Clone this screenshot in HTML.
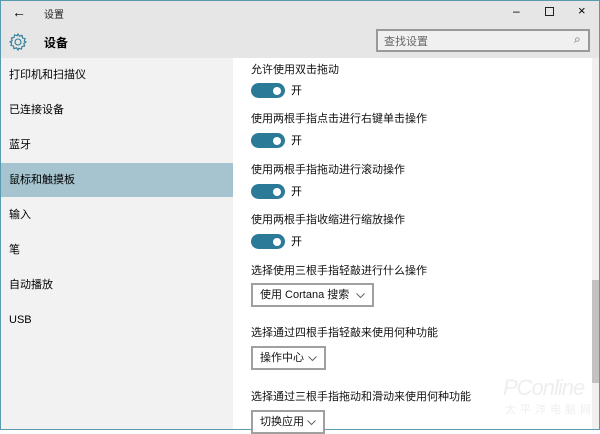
<!DOCTYPE html>
<html><head><meta charset="utf-8"><style>
*{margin:0;padding:0;box-sizing:border-box}
body{width:600px;height:430px;overflow:hidden;position:relative;background:#fff;font-family:"Liberation Sans","Noto Sans CJK SC",sans-serif;color:#000}
.a{position:absolute}
.hdr{left:0;top:0;width:600px;height:58px;background:#e6e6e6}
.side{left:0;top:58px;width:233px;height:372px;background:#f2f2f2}
.it{position:absolute;left:9px;font-size:11px;line-height:16px}
.lab{position:absolute;left:251px;font-size:11px;line-height:16px;color:#111}
.tg{position:absolute;left:251px;width:34px;height:15px;border-radius:8px;background:#2b7a98}
.tg:after{content:"";position:absolute;right:4px;top:3.5px;width:8px;height:8px;border-radius:50%;background:#fff}
.on{position:absolute;left:291px;font-size:11px;line-height:16px}
.dd{position:absolute;left:251px;height:24px;border:2px solid #a0a0a0;background:#fff;font-size:11px;line-height:20px;padding-left:7px;color:#111;white-space:nowrap}
.dd svg{position:absolute;right:7px;top:8px}
</style></head><body>
<div class="a hdr"></div>
<div class="a side"></div>
<div class="a" style="left:0;top:0;width:1px;height:430px;background:#5a9ab0"></div>
<div class="a" style="left:599px;top:0;width:1px;height:430px;background:#5a9ab0"></div>
<div class="a" style="left:0;top:0;width:600px;height:1px;background:#5a9ab0"></div>
<div class="a" style="left:0;top:429px;width:600px;height:1px;background:#5a9ab0"></div>
<div class="a" style="left:12px;top:4px;font-size:14px">&#8592;</div>
<div class="a" style="left:44px;top:6px;font-size:10px;color:#222">设置</div>
<div class="a" style="left:513px;top:4px;font-size:12px">&#8211;</div>
<div class="a" style="left:545px;top:7px;width:9px;height:9px;border:1px solid #222"></div>
<div class="a" style="left:578px;top:3px;font-size:13px">&#215;</div>
<svg class="a" style="left:8px;top:32px" width="20" height="20" viewBox="0 0 20 20"><path d="M10 2l1.5 2.2 2.6-.8.4 2.6 2.6.5-.8 2.6L18 10l-2.2 1.5.8 2.6-2.6.4-.5 2.6-2.6-.8L10 18l-1.5-2.2-2.6.8-.4-2.6-2.6-.5.8-2.6L2 10l2.2-1.5-.8-2.6 2.6-.4.5-2.6 2.6.8z" fill="none" stroke="#2b7a98" stroke-width="1.1"/><circle cx="10" cy="10" r="3" fill="none" stroke="#2b7a98" stroke-width="1.1"/></svg>
<div class="a" style="left:44px;top:34px;font-size:12px;font-weight:bold">设备</div>
<div class="a" style="left:376px;top:29px;width:214px;height:23px;border:2px solid #999;background:#f0f0f0"></div>
<div class="a" style="left:384px;top:33px;font-size:11px;color:#666">查找设置</div>
<div class="a" style="left:574px;top:32px;font-size:12px;color:#666">&#8981;</div>
<div class="a" style="left:1px;top:163px;width:232px;height:34px;background:#a5c4cf"></div>
<div class="it" style="top:67px">打印机和扫描仪</div>
<div class="it" style="top:102px">已连接设备</div>
<div class="it" style="top:137px">蓝牙</div>
<div class="it" style="top:172px">鼠标和触摸板</div>
<div class="it" style="top:207px">输入</div>
<div class="it" style="top:242px">笔</div>
<div class="it" style="top:277px">自动播放</div>
<div class="it" style="top:312px">USB</div>
<div class="lab" style="top:62px">允许使用双击拖动</div>
<div class="tg" style="top:83px"></div><div class="on" style="top:83px">开</div>
<div class="lab" style="top:111px">使用两根手指点击进行右键单击操作</div>
<div class="tg" style="top:133px"></div><div class="on" style="top:133px">开</div>
<div class="lab" style="top:162px">使用两根手指拖动进行滚动操作</div>
<div class="tg" style="top:184px"></div><div class="on" style="top:184px">开</div>
<div class="lab" style="top:212px">使用两根手指收缩进行缩放操作</div>
<div class="tg" style="top:234px"></div><div class="on" style="top:234px">开</div>
<div class="lab" style="top:263px">选择使用三根手指轻敲进行什么操作</div>
<div class="dd" style="top:283px;width:123px">使用 Cortana 搜索<svg width="9" height="6" viewBox="0 0 9 6"><path d="M.5.5l4 4 4-4" fill="none" stroke="#666"/></svg></div>
<div class="lab" style="top:325px">选择通过四根手指轻敲来使用何种功能</div>
<div class="dd" style="top:346px;width:75px">操作中心<svg width="9" height="6" viewBox="0 0 9 6"><path d="M.5.5l4 4 4-4" fill="none" stroke="#666"/></svg></div>
<div class="lab" style="top:389px">选择通过三根手指拖动和滑动来使用何种功能</div>
<div class="dd" style="top:410px;width:74px;height:24px">切换应用<svg width="9" height="6" viewBox="0 0 9 6"><path d="M.5.5l4 4 4-4" fill="none" stroke="#666"/></svg></div>
<div class="a" style="left:592px;top:58px;width:7px;height:371px;background:#f0f0f0"></div>
<div class="a" style="left:592px;top:280px;width:7px;height:103px;background:#c2c2c2"></div>
<div class="a" style="left:503px;top:375px;font-size:22px;color:#eeeeee;font-style:italic;letter-spacing:-1px">PConline</div>
<div class="a" style="left:505px;top:401px;font-size:11px;color:#eeeeee;letter-spacing:4px">太平洋电脑网</div>
</body></html>
